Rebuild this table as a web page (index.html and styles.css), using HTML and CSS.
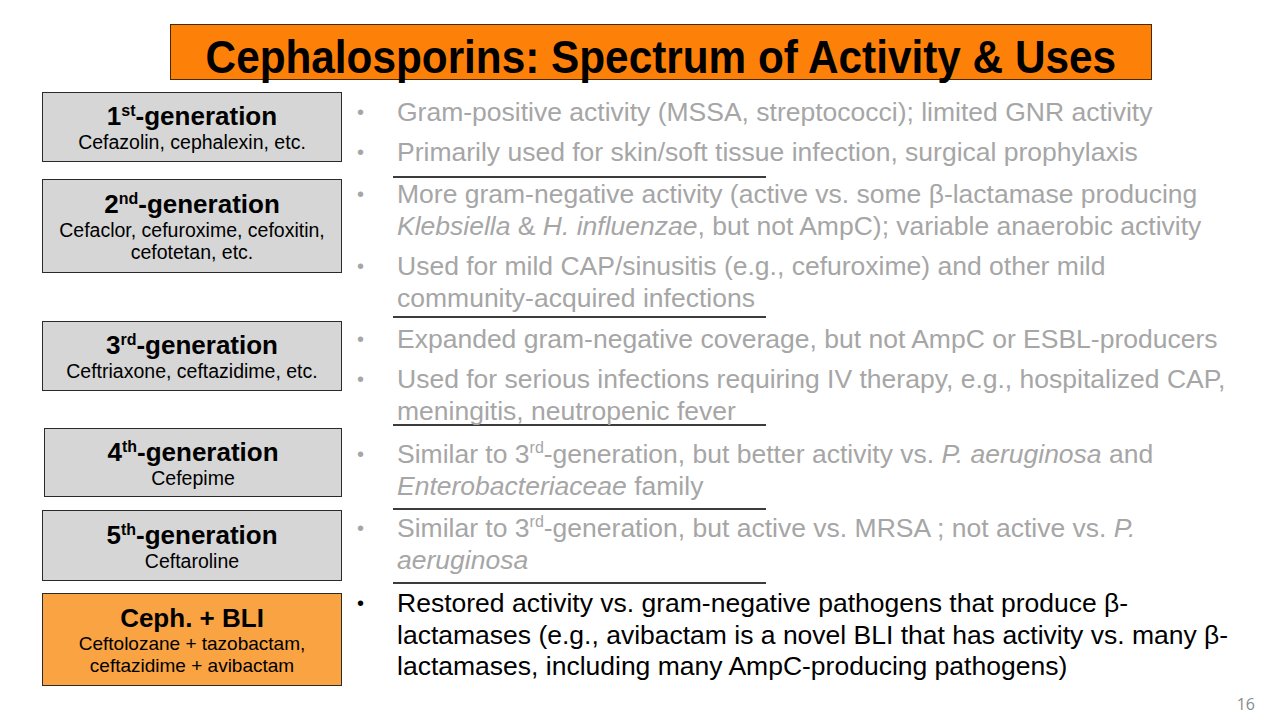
FILE: index.html
```html
<!DOCTYPE html>
<html lang="en">
<head>
    <meta charset="UTF-8">
    <meta name="viewport" content="width=device-width, initial-scale=1.0">
    <title>Cephalosporins</title>
    <link rel="stylesheet" href="styles.css">
</head>
<body>
    <div class="slide">
        <h1 class="title_bar"><span class="title_txt">Cephalosporins: Spectrum of Activity &amp; Uses</span></h1>

        <div class="content">
            <!-- generation boxes -->
            <div class="gens">
                <div class="gen gen1">
                    <div class="gen_name">1<sup>st</sup>-generation</div>
                    <div class="gen_drugs">Cefazolin, cephalexin, etc.</div>
                </div>
                <div class="gen gen2">
                    <div class="gen_name">2<sup>nd</sup>-generation</div>
                    <div class="gen_drugs">Cefaclor, cefuroxime, cefoxitin,<br>cefotetan, etc.</div>
                </div>
                <div class="gen gen3">
                    <div class="gen_name">3<sup>rd</sup>-generation</div>
                    <div class="gen_drugs">Ceftriaxone, ceftazidime, etc.</div>
                </div>
                <div class="gen gen4">
                    <div class="gen_name">4<sup>th</sup>-generation</div>
                    <div class="gen_drugs">Cefepime</div>
                </div>
                <div class="gen gen5">
                    <div class="gen_name">5<sup>th</sup>-generation</div>
                    <div class="gen_drugs">Ceftaroline</div>
                </div>
                <div class="gen gen6 bli">
                    <div class="gen_name">Ceph. + BLI</div>
                    <div class="gen_drugs">Ceftolozane + tazobactam,<br>ceftazidime + avibactam</div>
                </div>
            </div>

            <!-- uses -->
            <div class="uses">
                <ul class="grp grp1">
                    <li>Gram-positive activity (MSSA, streptococci); limited GNR activity</li>
                    <li>Primarily used for skin/soft tissue infection, surgical prophylaxis</li>
                </ul>
                <div class="rule rule1"></div>
                <ul class="grp grp2">
                    <li>More gram-negative activity (active vs. some &beta;-lactamase producing<br><i>Klebsiella</i> &amp; <i>H. influenzae</i>, but not AmpC); variable anaerobic activity</li>
                    <li>Used for mild CAP/sinusitis (e.g., cefuroxime) and other mild<br>community-acquired infections</li>
                </ul>
                <div class="rule rule2"></div>
                <ul class="grp grp3">
                    <li>Expanded gram-negative coverage, but not AmpC or ESBL-producers</li>
                    <li>Used for serious infections requiring IV therapy, e.g., hospitalized CAP,<br>meningitis, neutropenic fever</li>
                </ul>
                <div class="rule rule3"></div>
                <ul class="grp grp4">
                    <li>Similar to 3<sup>rd</sup>-generation, but better activity vs. <i>P. aeruginosa</i> and<br><i>Enterobacteriaceae</i> family</li>
                </ul>
                <div class="rule rule4"></div>
                <ul class="grp grp5">
                    <li>Similar to 3<sup>rd</sup>-generation, but active vs. MRSA ; not active vs. <i>P.</i><br><i>aeruginosa</i></li>
                </ul>
                <div class="rule rule5"></div>
                <ul class="grp grp6 now">
                    <li>Restored activity vs. gram-negative pathogens that produce &beta;-<br>lactamases (e.g., avibactam is a novel BLI that has activity vs. many &beta;-<br>lactamases, including many AmpC-producing pathogens)</li>
                </ul>
            </div>
        </div>

        <div class="page_num">16</div>
    </div>
</body>
</html>
```

FILE: styles.css
```css
html, body { margin: 0; padding: 0; background: #fff; }
body { font-family: "Liberation Sans", Arial, sans-serif; color: #000; }

.slide { width: 1280px; height: 720px; display: flex; flex-direction: column; overflow: hidden; }

/* title */
.title_bar { box-sizing: border-box; width: 982px; height: 56px; margin: 24px 0 0 170px; background: #fd8008; border: 1px solid #4a2800; display: flex; justify-content: center; align-items: center; font-size: 47px; font-weight: bold; line-height: 1; }
.title_txt { display: inline-block; transform: scaleX(0.9); white-space: nowrap; padding-top: 9px; }

.content { display: flex; align-items: flex-start; margin-top: 12px; }

/* left boxes */
.gens { width: 300px; margin-left: 42px; }
.gen { box-sizing: border-box; border: 1px solid #2a2a2a; background: #d6d6d6; display: flex; flex-direction: column; justify-content: center; text-align: center; }
.gen_name { font-size: 26px; font-weight: bold; line-height: 30px; }
.gen_name sup { font-size: 16px; line-height: 0; vertical-align: 9px; }
.gen_drugs { font-size: 19.5px; line-height: 22px; }
.gen1 { height: 70px; }
.gen2 { height: 94px; margin-top: 17px; }
.gen3 { height: 70px; margin-top: 48px; }
.gen4 { height: 69px; margin-top: 37px; margin-left: 2px; }
.gen5 { height: 71px; margin-top: 13px; }
.gen6 { height: 93px; margin-top: 12px; }
.bli { background: #f9a343; }
.bli .gen_drugs { font-size: 19px; }

/* right bullets */
.uses { margin-left: 15px; padding-top: 4px; }
.grp { list-style: none; margin: 0; padding: 0; font-size: 26.5px; line-height: 32px; color: #a6a6a6; }
.grp li { position: relative; padding-left: 40px; white-space: nowrap; }
.grp li + li { margin-top: 8px; }
.grp li::before { content: "\2022"; position: absolute; left: 0; top: 0; font-size: 20px; }
.grp sup { font-size: 16px; line-height: 0; vertical-align: 10px; }
.grp i { font-style: italic; }
.grp2 { margin-top: 0; }
.grp3 { margin-top: 5px; }
.grp4 { margin-top: 12px; }
.grp5 { margin-top: 2px; }
.grp6 { margin-top: 4px; }
.now { color: #000; line-height: 31.5px; }

.rule { width: 373px; height: 2px; margin-left: 36px; background: #3c3c3c; }
.rule1 { margin-top: 8px; }
.rule2 { margin-top: 2px; }
.rule3 { margin-top: -3px; }
.rule4 { margin-top: 6px; }
.rule5 { margin-top: 6px; }

.page_num { margin-top: auto; padding: 0 25px 5px 0; text-align: right; font-family: "Open Sans", sans-serif; font-size: 16px; color: #8a8a8a; }
```
